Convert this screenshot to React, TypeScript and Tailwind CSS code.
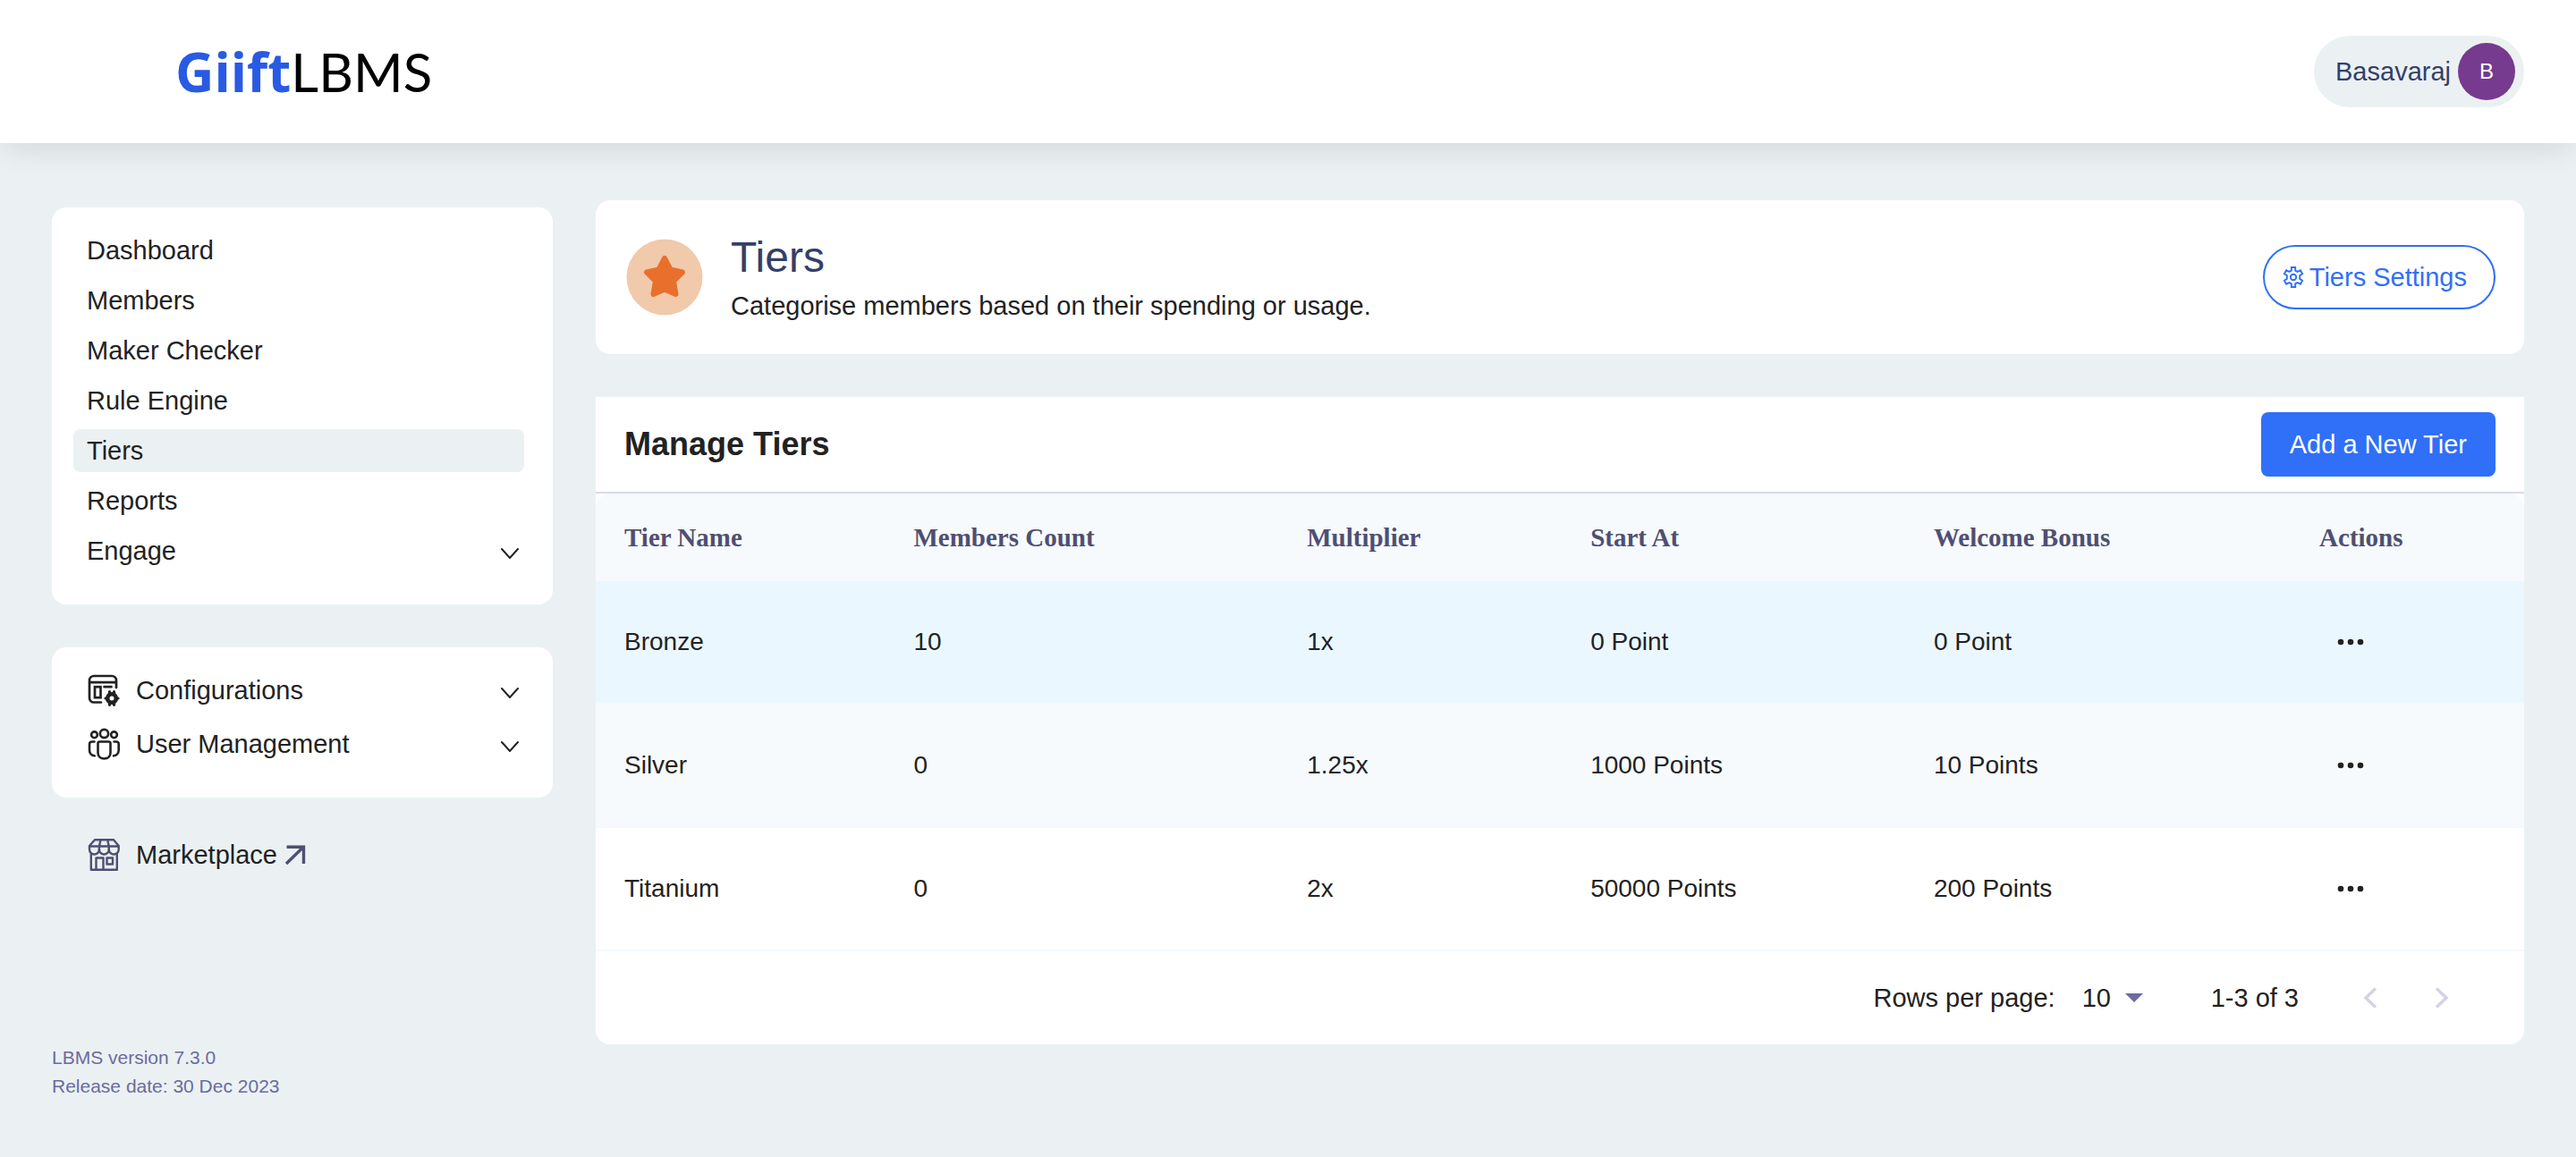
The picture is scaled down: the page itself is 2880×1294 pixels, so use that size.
import React from "react";

const tiers = [
  { name: "Bronze", members: "10", multiplier: "1x", start: "0 Point", bonus: "0 Point", row: "bg-[#ebf7fe]" },
  { name: "Silver", members: "0", multiplier: "1.25x", start: "1000 Points", bonus: "10 Points", row: "bg-[#f6fafd]" },
  { name: "Titanium", members: "0", multiplier: "2x", start: "50000 Points", bonus: "200 Points", row: "bg-white" },
];

const mainNav = ["Dashboard", "Members", "Maker Checker", "Rule Engine", "Tiers", "Reports"];

const columns = [
  { label: "Tier Name", width: "w-[15%]" },
  { label: "Members Count", width: "w-[20.4%]" },
  { label: "Multiplier", width: "w-[14.7%]" },
  { label: "Start At", width: "w-[17.8%]" },
  { label: "Welcome Bonus", width: "w-[20%]" },
  { label: "Actions", width: "w-[12.1%]" },
];

const cell = "border-b-2 border-[#f3f9fe] px-8";

function ChevronDown() {
  return (
    <svg aria-hidden="true" className="mt-1.5 h-3 w-5" viewBox="0 0 20 12" fill="none" stroke="#222" strokeWidth="2" strokeLinecap="round">
      <path d="M1 1l9 10 9-10" />
    </svg>
  );
}

function ConfigIcon() {
  return (
    <svg aria-hidden="true" className="h-9 w-9" viewBox="0 0 36 36" fill="none" stroke="#222" strokeWidth="2.700" strokeLinecap="round">
      <path d="M15 31.500H7a5 5 0 0 1-5-5V7a5 5 0 0 1 5-5h20a5 5 0 0 1 5 5v8M2 9.200h30M18.500 14.200h8" />
      <rect x="8" y="14.200" width="6.500" height="12" />
      <circle cx="27" cy="27" r="4.800" strokeWidth="4.600" />
      <path d="M24.500 19.700v2M29.500 19.700v2M24.500 32.300v2M29.500 32.300v2M20 27h1M33 27h1" strokeWidth="3.200" />
    </svg>
  );
}

function UsersIcon() {
  return (
    <svg aria-hidden="true" className="h-9 w-9" viewBox="0 0 36 36" fill="none" stroke="#222" strokeWidth="2.600" strokeLinecap="round">
      <circle cx="18.500" cy="6.500" r="4.600" />
      <circle cx="7.500" cy="7.800" r="3.400" />
      <circle cx="29.500" cy="7.800" r="3.400" />
      <path d="M11.500 17.500c0-1.300.7-2 2-2h10c1.300 0 2 .7 2 2V28c0 4-3 6.500-7 6.500s-7-2.500-7-6.500Z" />
      <path d="M7.500 15.500H4.700C3.200 15.500 2 16.500 2 18.200V25c0 3.500 2.500 6 5.700 6.300M29.500 15.500h2.500c1.500 0 2.700 1 2.700 2.700V25c0 3.500-2.500 6-5.700 6.300" />
    </svg>
  );
}

function StoreIcon() {
  return (
    <svg aria-hidden="true" className="h-9 w-9" viewBox="0 0 36 36" fill="none" stroke="#4f4f72" strokeWidth="2.400" strokeLinejoin="round">
      <path d="M8 1.200h21L34.700 8v4a5.400 5.400 0 0 1-10.900 0 5.400 5.400 0 0 1-10.900 0A5.400 5.400 0 0 1 2 12V8Z" />
      <path d="M2 8.500h32.700M12.900 13V8.500l1.600-7M23.800 13V8.500l-1.600-7M3.800 17v17.800h29V17" />
      <path d="M9.500 34.500V21.500h8v13M21.500 21.500h6.500v7h-6.500z" />
    </svg>
  );
}

function ArrowUpRight() {
  return (
    <svg aria-hidden="true" className="h-6 w-6" viewBox="0 0 24 24" fill="none" stroke="#4f4f72" strokeWidth="3.400">
      <path d="M2.500 3.200h19V22M21 3.500L2 22" />
    </svg>
  );
}

function GearIcon() {
  return (
    <svg aria-hidden="true" className="h-6 w-6" viewBox="0 0 24 24" fill="none" stroke="currentColor" strokeWidth="1.900">
      <path d="M9.800 1h4.400v3.600l2.300 1.300 3.400-1.600 2.200 3.900-2.900 1.900v3.800l2.900 1.900-2.200 3.900-3.400-1.600-2.300 1.300V23H9.800v-3.600l-2.300-1.300-3.400 1.600-2.200-3.900 2.900-1.900v-3.800L1.900 8.200l2.200-3.900 3.400 1.600 2.300-1.300Z" />
      <circle cx="12" cy="12" r="3.200" />
    </svg>
  );
}

function StarBadge() {
  return (
    <svg aria-hidden="true" className="h-[86px] w-[86px] shrink-0" viewBox="0 0 86 86">
      <circle cx="43" cy="43" r="42.500" fill="#f1c9ab" />
      <path
        d="M43 22l6.500 12.500 13.500 3L53 47.500 55.500 62 43 56.500 30.500 62 33 47.500 23 37.500l13.500-3Z"
        fill="#e8702c"
        stroke="#e8702c"
        strokeWidth="6"
        strokeLinejoin="round"
      />
    </svg>
  );
}

function Dots() {
  return (
    <svg aria-hidden="true" className="h-2 w-[30px]" viewBox="0 0 30 8" fill="#222">
      <circle cx="4" cy="4" r="3.300" />
      <circle cx="15" cy="4" r="3.300" />
      <circle cx="26" cy="4" r="3.300" />
    </svg>
  );
}

export default function App() {
  return (
    <div className="min-h-screen bg-[#ebf1f3] font-['Liberation_Sans',Arial,sans-serif] text-[29px] leading-10 text-[#222]">
      <header className="flex h-40 items-center justify-between bg-white pr-[58px] pl-[196px] shadow-[0_10px_30px_-4px_rgba(0,0,0,0.1)]">
        <a href="#" aria-label="GiiftLBMS home" className="flex items-baseline text-[60px] leading-none">
          <span className="font-['Open_Sans',sans-serif] font-bold text-[#285ae3]">Giift</span>
          <span className="font-['Lato',sans-serif] text-black">LBMS</span>
        </a>
        <button type="button" className="flex h-20 items-center gap-2 rounded-full bg-[#ebf1f3] pr-2.5 pl-6 text-[#343f68]">
          Basavaraj
          <span className="flex size-16 items-center justify-center rounded-full bg-[#763a8f] text-2xl text-white">B</span>
        </button>
      </header>

      <div className="flex items-start gap-12 pr-[58px] pl-[58px]">
        <aside className="w-[560px] shrink-0 pt-[72px]">
          <nav aria-label="Main" className="flex flex-col gap-2 rounded-2xl bg-white pt-6 pr-8 pb-9 pl-6">
            {mainNav.map((item) => (
              <a
                key={item}
                href="#"
                aria-current={item === "Tiers" ? "page" : undefined}
                className={item === "Tiers" ? "flex h-12 items-center rounded-lg bg-[#ebf1f3] px-[15px]" : "flex h-12 items-center px-[15px]"}
              >
                {item}
              </a>
            ))}
            <button type="button" className="flex h-12 items-center justify-between pr-1.5 pl-[15px]">
              Engage
              <ChevronDown />
            </button>
          </nav>

          <nav aria-label="Administration" className="mt-12 flex flex-col gap-3 rounded-2xl bg-white pt-6 pr-8 pb-9 pl-10">
            <button type="button" className="flex h-12 items-center justify-between pr-1.5">
              <span className="flex items-center gap-[18px]">
                <ConfigIcon />
                Configurations
              </span>
              <ChevronDown />
            </button>
            <button type="button" className="flex h-12 items-center justify-between pr-1.5">
              <span className="flex items-center gap-[18px]">
                <UsersIcon />
                User Management
              </span>
              <ChevronDown />
            </button>
          </nav>

          <a href="#" className="mt-10 flex h-12 items-center pl-10">
            <span className="flex items-center gap-[18px]">
              <StoreIcon />
              Marketplace
            </span>
            <span className="ml-2">
              <ArrowUpRight />
            </span>
          </a>

          <footer className="mt-[187px] text-[21px] leading-8 text-[#6b6b9f]">
            <p>LBMS version 7.3.0</p>
            <p>Release date: 30 Dec 2023</p>
          </footer>
        </aside>

        <main className="min-w-0 flex-1 pt-16">
          <section className="flex h-[172px] items-center justify-between rounded-2xl bg-white pr-8 pl-[34px]">
            <div className="flex items-center gap-[31px]">
              <StarBadge />
              <div>
                <h1 className="text-5xl leading-[60px] text-[#343f68]">Tiers</h1>
                <p className="mt-1">Categorise members based on their spending or usage.</p>
              </div>
            </div>
            <button type="button" className="flex h-[72px] items-center gap-1.5 rounded-full border-2 border-[#306ff8] pr-[30px] pl-5 text-[#306ff8]">
              <GearIcon />
              Tiers Settings
            </button>
          </section>

          <section className="mt-12 overflow-hidden rounded-b-2xl bg-white">
            <div className="flex h-[108px] items-center justify-between border-b-2 border-[#dadaec] px-8">
              <h2 className="text-4xl font-bold">Manage Tiers</h2>
              <button type="button" className="h-[72px] rounded-lg bg-[#306ff8] px-8 text-white">
                Add a New Tier
              </button>
            </div>

            <table className="w-full table-fixed border-separate border-spacing-0 text-left">
              <thead>
                <tr className="h-[98px] font-['Liberation_Serif',serif] text-[#4f4f72]">
                  {columns.map((column) => (
                    <th key={column.label} scope="col" className={`${column.width} bg-[#f6fafd] px-8 font-bold first:rounded-tl-2xl last:rounded-tr-2xl`}>
                      {column.label}
                    </th>
                  ))}
                </tr>
              </thead>
              <tbody className="text-[28px]">
                {tiers.map((tier) => (
                  <tr key={tier.name} className={`h-[138px] ${tier.row}`}>
                    <td className={cell}>{tier.name}</td>
                    <td className={cell}>{tier.members}</td>
                    <td className={cell}>{tier.multiplier}</td>
                    <td className={cell}>{tier.start}</td>
                    <td className={cell}>{tier.bonus}</td>
                    <td className={cell}>
                      <button type="button" aria-label={`Actions for ${tier.name}`} className="flex h-10 items-center px-5">
                        <Dots />
                      </button>
                    </td>
                  </tr>
                ))}
              </tbody>
            </table>

            <div className="flex h-[104px] items-center justify-end pr-[72px]">
              <label htmlFor="rows-per-page">Rows per page:</label>
              <div className="relative ml-[30px] flex items-center">
                <select id="rows-per-page" defaultValue="10" className="w-[68px] appearance-none bg-transparent">
                  <option>10</option>
                  <option>25</option>
                </select>
                <svg aria-hidden="true" className="pointer-events-none absolute right-0 h-2.5 w-5" viewBox="0 0 20 10" fill="#6b6b9f">
                  <path d="M0 0h20L10 10Z" />
                </svg>
              </div>
              <span className="ml-[76px]">1-3 of 3</span>
              <button type="button" aria-label="Previous page" disabled className="ml-[60px] flex size-10 items-center justify-center">
                <svg aria-hidden="true" className="h-6 w-4" viewBox="0 0 16 24" fill="none" stroke="#d3d3e5" strokeWidth="3.500">
                  <path d="M14 1.500L3 12l11 10.500" />
                </svg>
              </button>
              <button type="button" aria-label="Next page" disabled className="ml-10 flex size-10 items-center justify-center">
                <svg aria-hidden="true" className="h-6 w-4" viewBox="0 0 16 24" fill="none" stroke="#d3d3e5" strokeWidth="3.500">
                  <path d="M2 1.500L13 12 2 22.500" />
                </svg>
              </button>
            </div>
          </section>
        </main>
      </div>
    </div>
  );
}
